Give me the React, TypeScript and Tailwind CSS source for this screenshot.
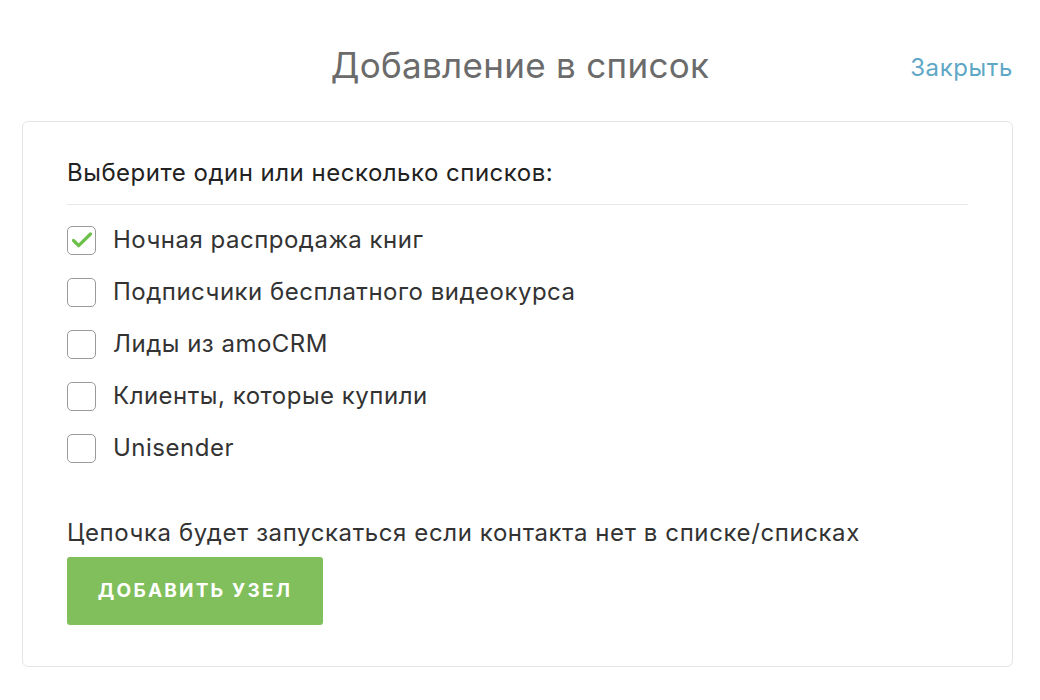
import { useState } from 'react';

const LISTS = [
  'Ночная распродажа книг',
  'Подписчики бесплатного видеокурса',
  'Лиды из amoCRM',
  'Клиенты, которые купили',
  'Unisender',
];

export default function App() {
  const [checked, setChecked] = useState<string[]>([LISTS[0]]);

  const toggle = (name: string) => {
    setChecked(prev => (prev.includes(name) ? prev.filter(n => n !== name) : [...prev, name]));
  };

  return (
    <div className="w-[1040px] h-[700px] bg-white font-['Inter',sans-serif]">
      {/* Header */}
      <div className="relative h-[121px] flex items-center justify-center">
        <h1 className="text-[35px] tracking-[0.3px] text-[#6b6b6b] font-normal pt-[10px]">Добавление в список</h1>
        <button className="absolute right-[27px] top-[50px] text-[24px] tracking-[0.6px] text-[#5fa7c6]">Закрыть</button>
      </div>

      {/* Card */}
      <div className="mx-[22px] w-[991px] h-[546px] border border-[#e5e5e5] rounded-[6px] px-[44px] pt-[35px]">
        <p className="text-[24px] tracking-[0.5px] text-[#222] leading-[32px]">Выберите один или несколько списков:</p>
        <div className="mt-[15px] h-px bg-[#e8e8e8]" />

        <div className="mt-[21px] flex flex-col gap-[24px]">
          {LISTS.map(name => (
            <ListRow key={name} label={name} checked={checked.includes(name)} onToggle={() => toggle(name)} />
          ))}
        </div>

        <p className="mt-[55px] text-[24px] tracking-[0.6px] text-[#333] leading-[32px]">
          Цепочка будет запускаться если контакта нет в списке/списках
        </p>
        <button className="mt-[8px] w-[256px] h-[68px] rounded-[3px] bg-[#80bf5c] text-white text-[19px] font-bold tracking-[2.2px]">
          ДОБАВИТЬ УЗЕЛ
        </button>
      </div>
    </div>
  );
}

interface ListRowProps {
  label: string;
  checked: boolean;
  onToggle: () => void;
}

function ListRow({ label, checked, onToggle }: ListRowProps) {
  return (
    <label className="flex items-center gap-[17px] h-[28px] cursor-pointer" onClick={onToggle}>
      <span className="w-[29px] h-[29px] border border-[#9a9a9a] rounded-[5px] flex items-center justify-center shrink-0">
        {checked && (
          <svg width="24" height="24" viewBox="0 0 24 24" fill="none">
            <path d="M3.5 12.5l5.2 5.2L20.5 6" stroke="#6cc04a" strokeWidth="3.2" strokeLinecap="round" strokeLinejoin="round" />
          </svg>
        )}
      </span>
      <span className="text-[24px] tracking-[0.5px] text-[#333]">{label}</span>
    </label>
  );
}
